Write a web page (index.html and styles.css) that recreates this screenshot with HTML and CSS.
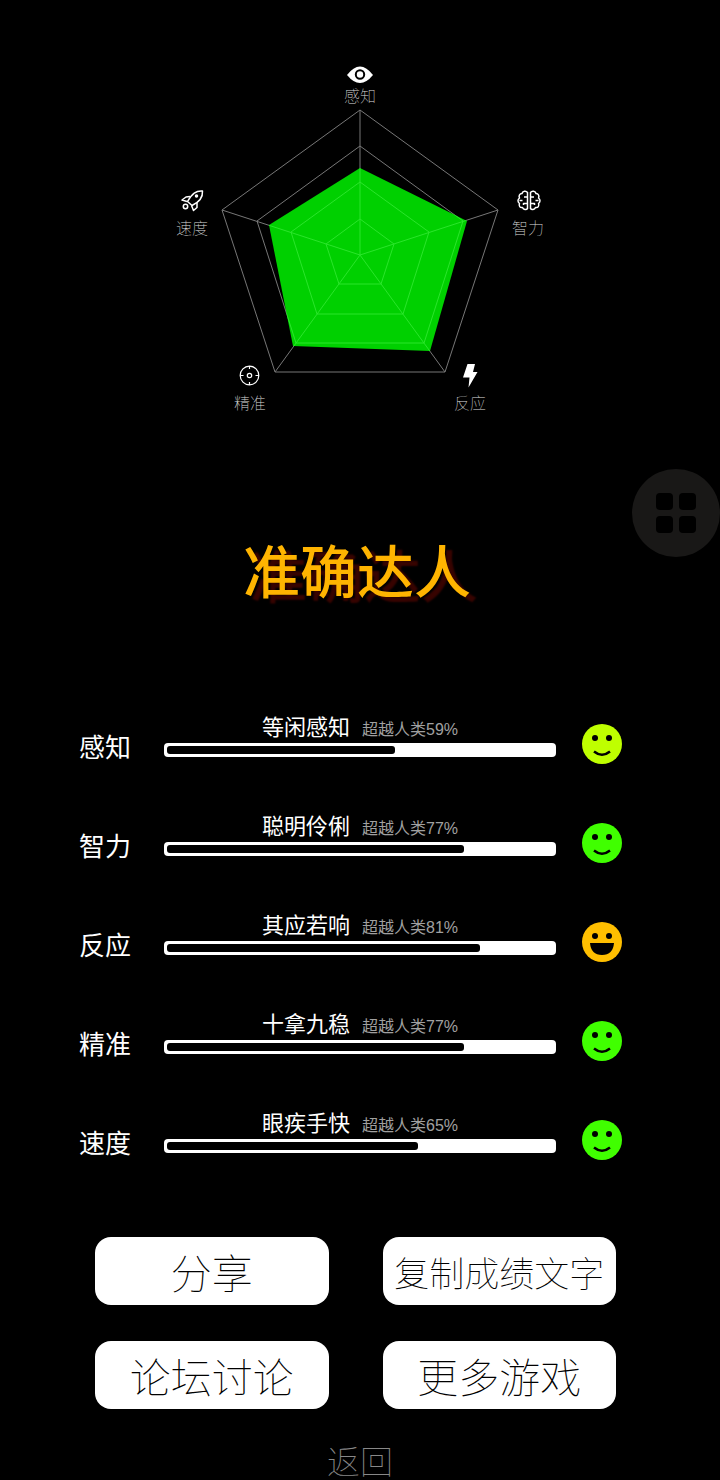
FILE: index.html
```html
<!DOCTYPE html>
<html lang="zh-CN">
<head>
    <meta charset="UTF-8">
    <meta name="viewport" content="width=device-width, initial-scale=1.0">
    <title>准确达人</title>
    <link rel="stylesheet" href="styles.css">
</head>
<body>
    <main class="page">
        <svg class="radar" viewBox="160 50 400 370">
            <defs>
                <clipPath id="inside">
                    <polygon points="360,168 467,221 430,351 293,346 269,225"/>
                </clipPath>
                <g id="web">
                    <polygon points="360,110 498,210 445,372 275,372 222,210"/>
                    <polygon points="360,146 463,221 424,343 296,343 257,221"/>
                    <polygon points="360,182 429,232 403,314 317,314 291,232"/>
                    <polygon points="360,219 394,244 381,284 339,284 326,244"/>
                    <path d="M360 255V110M360 255L498 210M360 255L445 372M360 255L275 372M360 255L222 210"/>
                </g>
            </defs>
            <use class="grid" href="#web"/>
            <polygon class="score" points="360,168 467,221 430,351 293,346 269,225"/>
            <g clip-path="url(#inside)"><use class="grid light" href="#web"/></g>

            <!-- eye -->
            <path fill="#fff" d="M347 75Q360 58 373 75Q360 91 347 75Z"/>
            <circle cx="360" cy="74.500" r="4.200" fill="#fff" stroke="#000" stroke-width="2"/>
            <text x="360" y="102">感知</text>

            <!-- brain -->
            <g class="line">
                <path d="M527.500 192.500C526 190.500 522.500 191 522 193.500C519.500 193.500 518.500 196 519.500 198C517.500 199.500 517.500 202 519.500 203.500C518.500 206 520 208 522.500 207.500C523.500 210 526.500 210 527.500 208.500Z"/>
                <path d="M530.500 192.500C532 190.500 535.500 191 536 193.500C538.500 193.500 539.500 196 538.500 198C540.500 199.500 540.500 202 538.500 203.500C539.500 206 538 208 535.500 207.500C534.500 210 531.500 210 530.500 208.500Z"/>
                <path d="M527 197H524M527 203.500H523.500V205M519.500 200.500H522.500M531 197H534M531 203.500H534.500V205M538.500 200.500H535.500"/>
            </g>
            <text x="528" y="234">智力</text>

            <!-- lightning -->
            <path fill="#fff" d="M467.500 364H475L473 372H477.500L468.500 387.500L469.500 377.500H463Z"/>
            <text x="470" y="409">反应</text>

            <!-- target -->
            <g class="line thin">
                <circle cx="249.500" cy="375.500" r="9.300"/>
                <circle cx="249.500" cy="375.500" r="2.200"/>
                <path d="M249.500 366V369M249.500 382V385M240 375.500H243.500M255.500 375.500H259"/>
            </g>
            <text x="250" y="409">精准</text>

            <!-- rocket -->
            <g class="line">
                <path d="M202.500 191C196 190.500 192 193.500 187.500 201.500L192 205.500C199.500 202 203 197.500 202.500 191Z"/>
                <path d="M190 196.500L186 197L182 200L187 201.500M197 203V207.500L193.500 210.500L191.500 205.500"/>
                <circle cx="185.500" cy="206.500" r="2.200"/>
                <circle cx="196.500" cy="196" r="1" fill="#fff"/>
            </g>
            <text x="192" y="234">速度</text>
        </svg>

        <h1 class="title">准确达人</h1>

        <ul class="scores">
            <li class="row">
                <span class="name">感知</span>
                <div class="info">
                    <p class="text"><span class="rank">等闲感知</span><span class="percent">超越人类59%</span></p>
                    <div class="bar"><div class="fill" style="width: 59%"></div></div>
                </div>
                <svg class="face lime" viewBox="0 0 40 40">
                    <circle cx="20" cy="20" r="20"/>
                    <g fill="#000"><circle cx="13" cy="14" r="3"/><circle cx="27" cy="14" r="3"/></g>
                    <path class="smile" d="M12 27.500Q20 34 28 27.500"/>
                </svg>
            </li>
            <li class="row">
                <span class="name">智力</span>
                <div class="info">
                    <p class="text"><span class="rank">聪明伶俐</span><span class="percent">超越人类77%</span></p>
                    <div class="bar"><div class="fill" style="width: 77%"></div></div>
                </div>
                <svg class="face green" viewBox="0 0 40 40">
                    <circle cx="20" cy="20" r="20"/>
                    <g fill="#000"><circle cx="13" cy="14" r="3"/><circle cx="27" cy="14" r="3"/></g>
                    <path class="smile" d="M12 27.500Q20 34 28 27.500"/>
                </svg>
            </li>
            <li class="row">
                <span class="name">反应</span>
                <div class="info">
                    <p class="text"><span class="rank">其应若响</span><span class="percent">超越人类81%</span></p>
                    <div class="bar"><div class="fill" style="width: 81%"></div></div>
                </div>
                <svg class="face orange" viewBox="0 0 40 40">
                    <circle cx="20" cy="20" r="20"/>
                    <g fill="#000"><circle cx="13" cy="14" r="3"/><circle cx="27" cy="14" r="3"/></g>
                    <path fill="#000" d="M8 21H32Q31 33 20 33Q9 33 8 21Z"/>
                </svg>
            </li>
            <li class="row">
                <span class="name">精准</span>
                <div class="info">
                    <p class="text"><span class="rank">十拿九稳</span><span class="percent">超越人类77%</span></p>
                    <div class="bar"><div class="fill" style="width: 77%"></div></div>
                </div>
                <svg class="face green" viewBox="0 0 40 40">
                    <circle cx="20" cy="20" r="20"/>
                    <g fill="#000"><circle cx="13" cy="14" r="3"/><circle cx="27" cy="14" r="3"/></g>
                    <path class="smile" d="M12 27.500Q20 34 28 27.500"/>
                </svg>
            </li>
            <li class="row">
                <span class="name">速度</span>
                <div class="info">
                    <p class="text"><span class="rank">眼疾手快</span><span class="percent">超越人类65%</span></p>
                    <div class="bar"><div class="fill" style="width: 65%"></div></div>
                </div>
                <svg class="face green" viewBox="0 0 40 40">
                    <circle cx="20" cy="20" r="20"/>
                    <g fill="#000"><circle cx="13" cy="14" r="3"/><circle cx="27" cy="14" r="3"/></g>
                    <path class="smile" d="M12 27.500Q20 34 28 27.500"/>
                </svg>
            </li>
        </ul>

        <div class="buttons">
            <button type="button">分享</button>
            <button type="button" class="small">复制成绩文字</button>
            <button type="button">论坛讨论</button>
            <button type="button">更多游戏</button>
        </div>

        <button type="button" class="back">返回</button>

        <button type="button" class="floating" aria-label="菜单">
            <span></span><span></span><span></span><span></span>
        </button>
    </main>
</body>
</html>
```

FILE: styles.css
```css
* {
    box-sizing: border-box;
}

body {
    margin: 0;
    background-color: #000;
    color: #fff;
    font-family: "Liberation Sans", "Noto Sans CJK SC", sans-serif;
}

button {
    border: none;
    padding: 0;
    font-family: inherit;
    font-weight: 100;
    cursor: pointer;
}

.page {
    position: relative;
    display: flex;
    flex-direction: column;
    overflow: hidden;
    padding-top: 50px;
}

/* radar chart */
.radar {
    width: 400px;
    height: 370px;
    align-self: center;
}
.radar text {
    fill: #ddd;
    font-size: 16px;
    font-weight: 100;
    text-anchor: middle;
}
.grid {
    fill: none;
    stroke: #777;
    stroke-width: 1;
}
.light {
    stroke: #2be52b;
}
.score {
    fill: #00d000;
}
.line {
    fill: none;
    stroke: #fff;
    stroke-width: 1.500;
    stroke-linejoin: round;
}
.thin {
    stroke-width: 1.200;
}

.title {
    margin: 113px 0 0;
    padding-right: 6px;
    color: #ffb400;
    font-size: 57px;
    font-weight: 500;
    line-height: 80px;
    text-align: center;
    text-shadow: 7px 5px 2px #380400;
}

/* score rows */
.scores {
    list-style: none;
    margin: 81px 0 0;
    padding: 0 98px 0 79px;
}
.row {
    display: flex;
    align-items: center;
    height: 99px;
}
.name {
    font-size: 26px;
    line-height: 36px;
    padding-top: 8px;
}
.info {
    flex: 1;
    margin: 0 26px 0 33px;
}
.text {
    display: flex;
    justify-content: center;
    align-items: baseline;
    gap: 12px;
    margin: 0;
    line-height: 26px;
}
.rank {
    font-size: 22px;
}
.percent {
    color: #a0a0a0;
    font-size: 16px;
}
.bar {
    height: 14px;
    margin-bottom: 16px;
    padding: 3px;
    border-radius: 4px;
    background-color: #fff;
}
.fill {
    height: 8px;
    border-radius: 3px;
    background-color: #000;
}
.face {
    width: 40px;
    height: 40px;
}
.lime {
    fill: #bfff00;
}
.green {
    fill: #40ff00;
}
.orange {
    fill: #ffbf00;
}
.smile {
    fill: none;
    stroke: #000;
    stroke-width: 2.500;
}

.buttons {
    display: grid;
    grid-template-columns: 1fr 1fr;
    gap: 36px 54px;
    margin-top: 48px;
    padding: 0 104px 0 95px;
}
.buttons button {
    height: 68px;
    border-radius: 16px;
    background-color: #fff;
    color: #000;
    font-size: 41px;
    white-space: nowrap;
}
.buttons .small {
    font-size: 35px;
}

.back {
    align-self: center;
    margin-top: 36px;
    background: none;
    color: #888;
    font-size: 33px;
    line-height: 35px;
}

/* floating menu button over the page */
.floating {
    position: absolute;
    top: 469px;
    right: 0;
    display: grid;
    grid-template-columns: 17px 17px;
    grid-template-rows: 17px 17px;
    place-content: center;
    gap: 6px;
    width: 88px;
    height: 88px;
    border-radius: 50%;
    background-color: #191817;
}
.floating span {
    border-radius: 4px;
    background-color: #000;
}
```
